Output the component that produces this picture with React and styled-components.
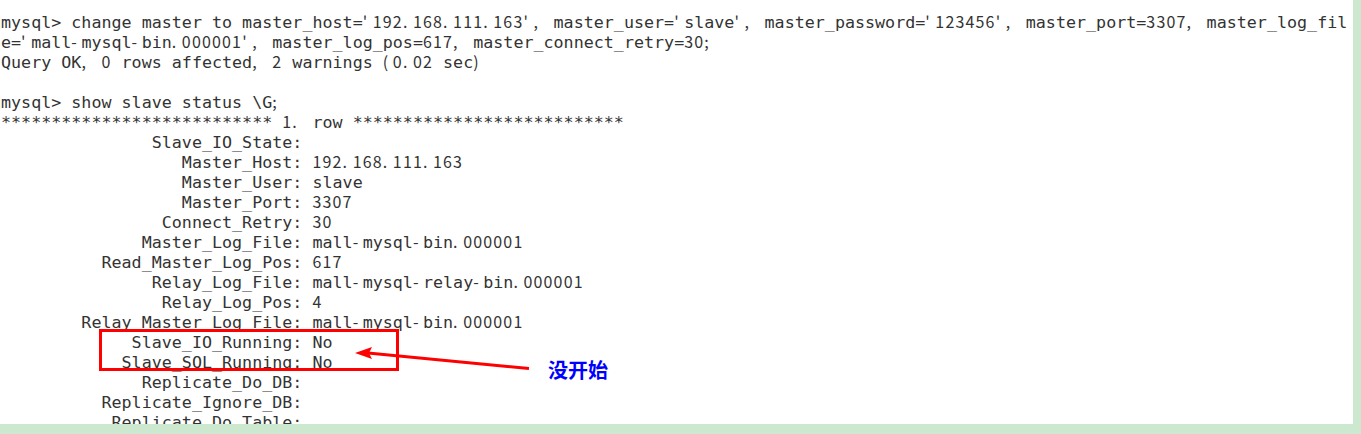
import React from 'react';
import styled, { createGlobalStyle } from 'styled-components';

const Global = createGlobalStyle`
  html, body { margin: 0; padding: 0; background: #cce8cf; }
`;

const Page = styled.div`
  display: flex;
  width: 1361px;
  height: 434px;
  box-sizing: border-box;
  padding: 0 8px 10px 0;
  background: #cce8cf;
`;

const Terminal = styled.div`
  position: relative;
  flex: 1;
  display: flex;
  flex-direction: column;
  box-sizing: border-box;
  padding: 12px 0 0 1px;
  background: #ffffff;
  overflow: hidden;
  font-family: "DejaVu Sans Mono", monospace;
  font-size: 16.7px;
  color: #333333;
`;

const Line = styled.div`
  flex: 0 0 20px;
  height: 20px;
  line-height: 20px;
  white-space: pre;
`;

const Cell = styled.span`
  display: inline-block;
  width: 10.055px;
  line-height: 1;
  font-family: "Noto Sans CJK SC", "Noto Sans", sans-serif;
  font-size: 16px;
`;

const RedBox = styled.div`
  position: absolute;
  left: 99px;
  top: 329px;
  width: 300px;
  height: 42px;
  box-sizing: border-box;
  border: 3px solid #ff0000;
`;

const Arrow = styled.svg`
  position: absolute;
  left: 350px;
  top: 340px;
  overflow: visible;
`;

const Note = styled.div`
  position: absolute;
  left: 548px;
  top: 360px;
  line-height: 20px;
  font-family: "Noto Sans CJK SC", sans-serif;
  font-weight: 700;
  font-size: 20px;
  color: #0000ff;
`;

const ALT = /[0-9.,'();\-]/;

function Text({ s }) {
  const out = [];
  let buf = '';
  let k = 0;
  for (const ch of s) {
    if (ALT.test(ch)) {
      if (buf) out.push(buf);
      buf = '';
      out.push(<Cell key={k++}>{ch}</Cell>);
    } else {
      buf += ch;
    }
  }
  if (buf) out.push(buf);
  return <>{out}</>;
}

const head = [
  "mysql> change master to master_host='192.168.111.163', master_user='slave', master_password='123456', master_port=3307, master_log_fil",
  "e='mall-mysql-bin.000001', master_log_pos=617, master_connect_retry=30;",
  "Query OK, 0 rows affected, 2 warnings (0.02 sec)",
  "",
  "mysql> show slave status \\G;",
  "*************************** 1. row ***************************",
];

const fields = [
  ['Slave_IO_State', ''],
  ['Master_Host', '192.168.111.163'],
  ['Master_User', 'slave'],
  ['Master_Port', '3307'],
  ['Connect_Retry', '30'],
  ['Master_Log_File', 'mall-mysql-bin.000001'],
  ['Read_Master_Log_Pos', '617'],
  ['Relay_Log_File', 'mall-mysql-relay-bin.000001'],
  ['Relay_Log_Pos', '4'],
  ['Relay_Master_Log_File', 'mall-mysql-bin.000001'],
  ['Slave_IO_Running', 'No'],
  ['Slave_SQL_Running', 'No'],
  ['Replicate_Do_DB', ''],
  ['Replicate_Ignore_DB', ''],
  ['Replicate_Do_Table', ''],
];

const lines = [
  ...head,
  ...fields.map(([k, v]) => k.padStart(29, ' ') + ': ' + v),
];

export default function App() {
  return (
    <>
      <Global />
      <Page>
        <Terminal>
          {lines.map((l, i) => (
            <Line key={i}>
              <Text s={l} />
            </Line>
          ))}
          <RedBox />
          <Arrow width="190" height="40" viewBox="0 0 190 40">
            <line x1="179" y1="28.5" x2="18" y2="13" stroke="#ff0000" strokeWidth="3" />
            <polygon points="5,13 22,7 19,13 22,19" fill="#ff0000" />
          </Arrow>
          <Note>没开始</Note>
        </Terminal>
      </Page>
    </>
  );
}
